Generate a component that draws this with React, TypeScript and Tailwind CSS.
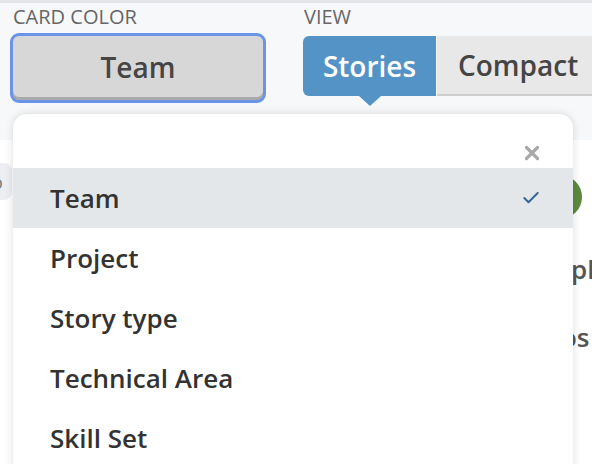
import { X, Check } from "lucide-react";

const options = ["Team", "Project", "Story type", "Technical Area", "Skill Set"];

export default function App() {
  const selected = "Team";

  return (
    <div
      className="relative h-[464px] w-[592px] overflow-hidden bg-white"
      style={{ fontFamily: '"Open Sans", "Liberation Sans", sans-serif' }}
    >
      {/* Header controls */}
      <div className="h-[140px] border-t-[3px] border-[#e3e5e8] bg-[#f7f8fa]">
        <div className="flex">
          <div className="ml-[10px] w-[256px]">
            <div className="pl-[3px] text-[20px] leading-[28px] text-[#666]">CARD COLOR</div>
            <button className="mt-[2px] flex h-[70px] w-[256px] items-center justify-center rounded-[9px] border-[3px] border-[#6b93e6] bg-[#d7d7d7] pb-[2px] text-[28px] font-semibold text-[#454545] shadow-[inset_0_-3px_0_#a9a9a9]">
              Team
            </button>
          </div>
          <div className="ml-[37px] flex-1">
            <div className="pl-[1px] text-[20px] leading-[28px] text-[#666]">VIEW</div>
            <div className="mt-[5px] flex h-[60px]">
              <div className="relative flex w-[133px] items-center justify-center rounded-l-[6px] bg-[#5393c5] text-[28px] font-semibold text-white">
                Stories
                <span className="absolute left-1/2 top-full h-0 w-0 -translate-x-1/2 border-x-[11px] border-t-[10px] border-x-transparent border-t-[#5393c5]" />
              </div>
              <div className="ml-[1px] flex flex-1 items-center border-b-[2px] border-[#cfcfcf] bg-[#e8e8e8] pl-[21px] text-[28px] font-semibold text-[#454545]">
                Compact
              </div>
            </div>
          </div>
        </div>
      </div>

      {/* Board content behind the menu */}
      <div className="absolute left-0 top-[163px] flex h-[37px] w-[12px] items-center overflow-hidden rounded-r-[8px] bg-[#eceef1]">
        <span className="-ml-[8px] text-[18px] leading-none text-[#777]">o</span>
      </div>
      <div className="absolute left-[538px] top-[175px] h-[44px] w-[44px] rounded-full bg-[#5b8a3e]" />
      <div className="absolute left-[571px] top-[250px] text-[26px] font-semibold text-[#555]">pl</div>
      <div className="absolute left-[561px] top-[318px] text-[26px] font-semibold text-[#555]">os</div>

      {/* Dropdown */}
      <div className="absolute left-[13px] top-[114px] h-[400px] w-[560px] rounded-t-[14px] bg-white shadow-[0_0_8px_rgba(0,0,0,0.14)]">
        <div className="flex h-[54px] items-end justify-end pb-[4px] pr-[30px]">
          <X className="h-[22px] w-[22px] text-[#a9a9a9]" strokeWidth={3.5} />
        </div>
        {options.map((o) => (
          <div
            key={o}
            className={`flex h-[60px] items-center justify-between pl-[37px] pr-[32px] text-[26px] font-semibold text-[#333] ${
              o === selected ? "bg-[#e4e7ea]" : ""
            }`}
          >
            <span>{o}</span>
            {o === selected && <Check className="h-[20px] w-[20px] text-[#3b6896]" strokeWidth={2.5} />}
          </div>
        ))}
      </div>
    </div>
  );
}
